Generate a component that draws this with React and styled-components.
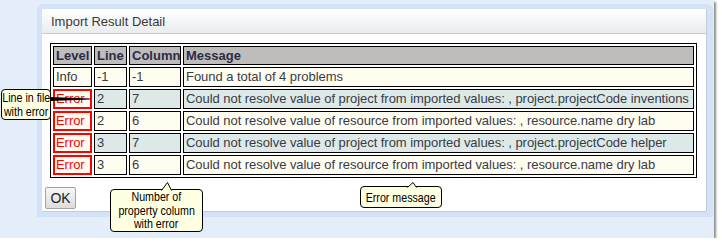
import React from 'react';
import styled, { createGlobalStyle } from 'styled-components';

const Global = createGlobalStyle`
  html, body { margin: 0; padding: 0; background: #ffffff; }
  body { font-family: "Liberation Sans", Arial, sans-serif; }
`;

const Screen = styled.div`
  position: relative;
  width: 714px;
  height: 238px;
  box-sizing: border-box;
  padding: 4px 0 0 37px;
  background: #e4edfa;
  box-shadow: 2px 2px 2px rgba(0, 0, 0, 0.45);
`;

const Frame = styled.div`
  width: 676px;
  box-sizing: border-box;
  padding: 5px 6px 5px 5px;
  background: #d3e2f6;
  border-radius: 6px 6px 0 0;
`;

const Panel = styled.div`
  height: 203px;
  box-sizing: border-box;
  background: #ffffff;
  border-right: 1px solid #c3cbd6;
  border-bottom: 1px solid #c3cbd6;
  display: flex;
  flex-direction: column;
`;

const TitleBar = styled.div`
  height: 25px;
  box-sizing: border-box;
  padding-left: 9px;
  display: flex;
  align-items: center;
  background: linear-gradient(#ffffff, #e9ecf0);
  border-bottom: 1px solid #c5cad1;
  font-size: 13px;
  color: #3a3a3a;
`;

const Content = styled.div`
  padding: 9px 9px 0 3px;
  display: flex;
  flex-direction: column;
  align-items: flex-start;
`;

const Grid = styled.table`
  width: 647px;
  margin-left: 5px;
  border: 1px solid #000000;
  border-collapse: separate;
  border-spacing: 2px;
  table-layout: fixed;
  font-size: 13px;
`;

const HeadCell = styled.th`
  width: ${(p) => (p.$w ? `${p.$w}px` : 'auto')};
  background: #bebdbc;
  border: 1px solid #000000;
  padding: 1px 2px;
  line-height: 15px;
  text-align: left;
  font-weight: bold;
  color: #2b2b45;
`;

const Cell = styled.td`
  background: ${(p) => (p.$tone === 'teal' ? '#dde9e6' : '#fffdf0')};
  border: ${(p) => (p.$error ? '2px solid #ff0000' : '1px solid #000000')};
  padding: ${(p) => (p.$error ? '1px 1px' : '2px 2px')};
  line-height: 14px;
  letter-spacing: -0.05px;
  color: ${(p) => (p.$error ? '#ff0000' : '#3a3a48')};
  white-space: nowrap;
  overflow: hidden;
`;

const OkButton = styled.button`
  margin-top: 9px;
  width: 31px;
  height: 22px;
  padding: 0;
  font-family: "Liberation Sans", Arial, sans-serif;
  font-size: 14px;
  color: #222222;
  border: 1px solid #a3a3a3;
  border-radius: 2px;
  background: linear-gradient(#f7f7f7, #dcdcdc);
`;

const Callout = styled.div`
  position: absolute;
  left: ${(p) => p.$x}px;
  top: ${(p) => p.$y}px;
  width: ${(p) => p.$w}px;
  height: ${(p) => p.$h}px;
  box-sizing: border-box;
  border: 1px solid #000000;
  border-radius: 4px;
  background: #ffffe1;
  display: flex;
  flex-direction: column;
  justify-content: center;
  align-items: center;
  font-family: "Liberation Sans", Arial, sans-serif;
  font-size: 13px;
  line-height: ${(p) => p.$lh || 13}px;
  color: #000000;
`;

const CalloutLine = styled.span`
  display: block;
  white-space: nowrap;
  transform: scaleX(0.82);
  transform-origin: center;
`;

const UpPointer = styled.svg`
  position: absolute;
  left: ${(p) => p.$x}px;
  top: ${(p) => -p.$h}px;
  overflow: visible;
`;

const SidePointer = styled.svg`
  position: absolute;
  left: 100%;
  top: ${(p) => p.$y}px;
  overflow: visible;
`;

const rows = [
  { level: 'Info', line: '-1', col: '-1', msg: 'Found a total of 4 problems' },
  { level: 'Error', line: '2', col: '7', msg: 'Could not resolve value of project from imported values: , project.projectCode inventions' },
  { level: 'Error', line: '2', col: '6', msg: 'Could not resolve value of resource from imported values: , resource.name dry lab' },
  { level: 'Error', line: '3', col: '7', msg: 'Could not resolve value of project from imported values: , project.projectCode helper' },
  { level: 'Error', line: '3', col: '6', msg: 'Could not resolve value of resource from imported values: , resource.name dry lab' },
];

function Up({ x, h, w }) {
  return (
    <UpPointer $x={x} $h={h} width={w} height={h + 1}>
      <polygon points={`0,${h + 1} ${w / 2 + 1},0 ${w},${h + 1}`} fill="#ffffe1" />
      <polyline points={`0.5,${h + 0.5} ${w / 2 + 1},0.5 ${w - 0.5},${h + 0.5}`} fill="none" stroke="#000" strokeWidth="1" />
    </UpPointer>
  );
}

export default function App() {
  return (
    <>
      <Global />
      <Screen>
        <Frame>
          <Panel>
            <TitleBar>Import Result Detail</TitleBar>
            <Content>
              <Grid>
                <thead>
                  <tr>
                    <HeadCell $w={33}>Level</HeadCell>
                    <HeadCell $w={27}>Line</HeadCell>
                    <HeadCell $w={46}>Column</HeadCell>
                    <HeadCell>Message</HeadCell>
                  </tr>
                </thead>
                <tbody>
                  {rows.map((r, i) => {
                    const tone = i % 2 === 1 ? 'teal' : 'cream';
                    return (
                      <tr key={i}>
                        <Cell $error={r.level === 'Error'}>{r.level}</Cell>
                        <Cell $tone={tone}>{r.line}</Cell>
                        <Cell $tone={tone}>{r.col}</Cell>
                        <Cell $tone={tone}>{r.msg}</Cell>
                      </tr>
                    );
                  })}
                </tbody>
              </Grid>
              <OkButton>OK</OkButton>
            </Content>
          </Panel>
        </Frame>

        <Callout $x={1} $y={89} $w={50} $h={31} $lh={14}>
          <CalloutLine>Line in file</CalloutLine>
          <CalloutLine>with error</CalloutLine>
          <SidePointer $y={7} width="40" height="4">
            <polygon points="0,0 40,1.5 40,2.5 0,4" fill="#000" />
          </SidePointer>
        </Callout>

        <Callout $x={110} $y={189} $w={93} $h={43} $lh={13.5}>
          <CalloutLine>Number of</CalloutLine>
          <CalloutLine>property column</CalloutLine>
          <CalloutLine>with error</CalloutLine>
          <Up x={50} h={8} w={11} />
        </Callout>

        <Callout $x={360} $y={186} $w={82} $h={22}>
          <CalloutLine>Error message</CalloutLine>
          <Up x={46} h={5} w={10} />
        </Callout>
      </Screen>
    </>
  );
}
